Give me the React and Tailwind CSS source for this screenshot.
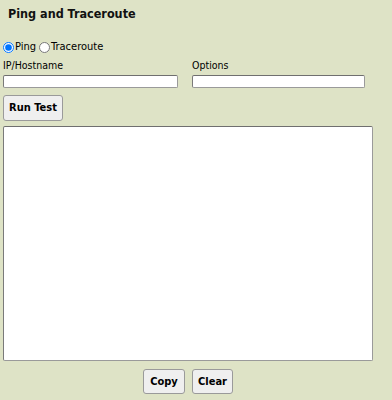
import React from "react";

export default function App() {
  const font = { fontFamily: '"DejaVu Sans Condensed", "DejaVu Sans", Verdana, sans-serif' };
  return (
    <div className="w-[392px] h-[400px] bg-[#dee3c6] text-black overflow-hidden" style={font}>
      <div className="pl-[8px] pt-[6px] h-[40px] text-[12.5px] font-bold leading-[15px] text-[#111]">Ping and Traceroute</div>
      <div className="pl-[3px] flex flex-col w-[373px]">
        <div className="flex items-center h-[15px] text-[11px]">
          <input type="radio" name="m" defaultChecked className="m-0 w-[11px] h-[11px] accent-[#0075ff]" />
          <span className="ml-[1px]">Ping</span>
          <input type="radio" name="m" className="m-0 ml-[3px] w-[11px] h-[11px]" />
          <span className="ml-[1px]">Traceroute</span>
        </div>
        <div className="flex mt-[4px] text-[10.5px] leading-[13px]">
          <div className="w-[189px] flex flex-col">
            <span>IP/Hostname</span>
            <input className="mt-[3px] w-[175px] h-[13px] bg-white border border-[#9a9a9a] border-t-[#6f6f6f] border-l-[#7a7a7a] rounded-[2px] outline-none" />
          </div>
          <div className="flex flex-col">
            <span>Options</span>
            <input className="mt-[3px] w-[173px] h-[13px] bg-white border border-[#9a9a9a] border-t-[#6f6f6f] border-l-[#7a7a7a] rounded-[2px] outline-none" />
          </div>
        </div>
        <div className="mt-[6px]">
          <button className="w-[60px] h-[26px] bg-[#efefef] border border-[#9a9a9a] rounded-[3px] text-[11px] font-bold">Run Test</button>
        </div>
        <textarea className="mt-[5px] w-[370px] h-[235px] bg-white border border-[#9a9a9a] border-t-[#6f6f6f] border-l-[#7a7a7a] rounded-[2px] resize-none outline-none" />
        <div className="mt-[8px] w-[370px] flex justify-center gap-[7px]">
          <button className="w-[42px] h-[25px] bg-[#efefef] border border-[#9a9a9a] rounded-[3px] text-[11px] font-bold">Copy</button>
          <button className="w-[41px] h-[25px] bg-[#efefef] border border-[#9a9a9a] rounded-[3px] text-[11px] font-bold">Clear</button>
        </div>
      </div>
    </div>
  );
}
